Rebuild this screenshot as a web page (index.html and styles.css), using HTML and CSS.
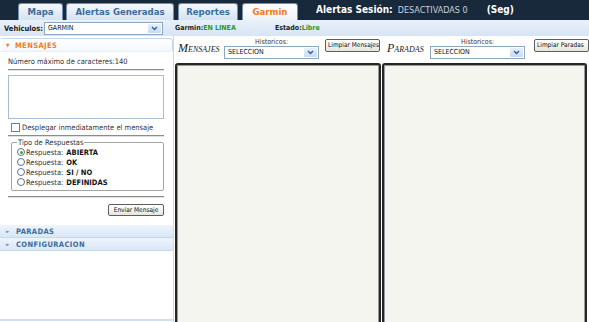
FILE: index.html
```html
<!DOCTYPE html>
<html lang="es">
<head>
<meta charset="UTF-8">
<title>Garmin</title>
<link rel="stylesheet" href="styles.css">
</head>
<body>
<div class="topbar">
    <ul class="tabs">
        <li class="tab t-mapa">Mapa</li>
        <li class="tab t-alertas">Alertas Generadas</li>
        <li class="tab t-reportes">Reportes</li>
        <li class="tab t-garmin active">Garmin</li>
    </ul>
    <div class="session"><b>Alertas Sesión:</b><span class="off">DESACTIVADAS 0</span><b class="seg">(Seg)</b></div>
</div>
<div class="subbar">
    <b class="lbl">Vehiculos:</b>
    <div class="select veh">GARMIN<span class="arrow"><svg width="7" height="5" viewBox="0 0 7 5"><path d="M1 1l2.5 2.5L6 1" fill="none" stroke="#2f5f9e" stroke-width="1.4"/></svg></span></div>
    <span class="status s-garmin"><b>Garmin:</b><b class="ok">EN LINEA</b></span>
    <span class="status"><b>Estado:</b><b class="ok">Libre</b></span>
</div>
<div class="main">
    <div class="sidebar">
        <div class="acc-head open"><span class="tri">&#9660;</span>MENSAJES</div>
        <div class="acc-body">
            <div class="maxchars">Número máximo de caracteres:140</div>
            <div class="rule"></div>
            <div class="msgbox"></div>
            <label class="check"><span class="box"></span>Desplegar inmediatamente el mensaje</label>
            <div class="rule"></div>
            <fieldset class="tipo">
                <legend>Tipo de Respuestas</legend>
                <div class="radio"><span class="dot on"></span>Respuesta: <b>ABIERTA</b></div>
                <div class="radio"><span class="dot"></span>Respuesta: <b>OK</b></div>
                <div class="radio"><span class="dot"></span>Respuesta: <b>SI / NO</b></div>
                <div class="radio"><span class="dot"></span>Respuesta: <b>DEFINIDAS</b></div>
            </fieldset>
            <div class="rule"></div>
            <div class="send-row"><span class="btn">Enviar Mensaje</span></div>
        </div>
        <div class="acc-head closed"><span class="tri">&#9658;</span>PARADAS</div>
        <div class="acc-head closed"><span class="tri">&#9658;</span>CONFIGURACION</div>
        <div class="side-fill"></div>
        <div class="side-foot"></div>
    </div>
    <div class="content">
        <div class="content-head">
            <div class="half h-left">
                <span class="title">Mensajes</span>
                <div class="hist">
                    <span class="hist-lbl">Historicos:</span>
                    <div class="select">SELECCION<span class="arrow"><svg width="7" height="5" viewBox="0 0 7 5"><path d="M1 1l2.5 2.5L6 1" fill="none" stroke="#2f5f9e" stroke-width="1.4"/></svg></span></div>
                </div>
                <span class="btn clear">Limpiar Mensajes</span>
            </div>
            <div class="half h-right">
                <span class="title">Paradas</span>
                <div class="hist">
                    <span class="hist-lbl">Historicos:</span>
                    <div class="select">SELECCION<span class="arrow"><svg width="7" height="5" viewBox="0 0 7 5"><path d="M1 1l2.5 2.5L6 1" fill="none" stroke="#2f5f9e" stroke-width="1.4"/></svg></span></div>
                </div>
                <span class="btn clear">Limpiar Paradas</span>
            </div>
        </div>
        <div class="panels">
            <div class="panel p-left"></div>
            <div class="panel p-right"></div>
        </div>
    </div>
</div>
</body>
</html>
```

FILE: styles.css
```css
body {
    margin: 0;
    padding: 0;
    width: 589px;
    height: 322px;
    overflow: hidden;
    font-family: "DejaVu Sans", Verdana, sans-serif;
    font-stretch: condensed;
    font-size: 8px;
    color: #222;
    background: #fff;
}
.topbar {
    height: 20px;
    background: #17293b;
    display: flex;
    align-items: flex-end;
}
.tabs {
    list-style: none;
    margin: 0 0 0 18px;
    padding: 0;
    display: flex;
    gap: 3px;
}
.tab {
    height: 16px;
    line-height: 16px;
    text-align: center;
    font-size: 9.5px;
    font-weight: bold;
    color: #3d6c9c;
    background: linear-gradient(#f4f8fc, #d5e3f2);
    border: 1px solid #6f8fae;
    border-bottom: none;
    border-radius: 3px 3px 0 0;
}
.t-mapa { width: 43px; }
.t-alertas { width: 106px; }
.t-reportes { width: 58px; margin-left: 1px; }
.t-garmin { width: 54px; margin-left: 1px; }
.tab.active {
    color: #ef7b1e;
    background: linear-gradient(#ffffff, #eef4fa);
}
.session {
    color: #fff;
    font-size: 10px;
    margin-left: 18px;
    height: 19px;
    line-height: 19px;
    align-self: flex-start;
}
.session .off {
    font-size: 9px;
    color: #c9d2dc;
    margin-left: 5px;
}
.session .seg {
    margin-left: 19px;
}
.subbar {
    height: 16px;
    background: linear-gradient(#e9f1fa, #d6e4f4);
    display: flex;
    align-items: center;
    padding-left: 4px;
}
.subbar .lbl {
    color: #222;
    font-size: 7.5px;
    margin-right: 1px;
}
.select {
    position: relative;
    height: 11px;
    line-height: 11px;
    border: 1px solid #8ea6c0;
    background: #fff;
    padding-left: 3px;
    font-size: 7px;
    color: #111;
}
.select .arrow {
    position: absolute;
    right: 1px;
    top: 1px;
    width: 13px;
    height: 9px;
    background: linear-gradient(#e8f0fa, #c8daef);
    border-radius: 1px;
    display: flex;
    align-items: center;
    justify-content: center;
}
.veh {
    width: 114px;
}
.status {
    font-size: 7px;
    color: #222;
}
.s-garmin {
    margin-left: 12px;
    width: 100px;
}
.ok {
    color: #1f9a1f;
}
.main {
    display: flex;
    height: 286px;
}
.sidebar {
    width: 175px;
    border-right: 1px solid #c9dbee;
    display: flex;
    flex-direction: column;
}
.acc-head {
    flex-shrink: 0;
    height: 12px;
    line-height: 12px;
    font-weight: bold;
    font-size: 7.5px;
    letter-spacing: 0.4px;
}
.acc-head.open {
    margin: 2px 0 0 2px;
    color: #ef7f22;
    border: 1px solid #c3d6eb;
    border-bottom: none;
    border-left: none;
    border-radius: 0 4px 0 0;
    background: linear-gradient(#ffffff, #f3f7fc);
}
.acc-head.open .tri {
    padding-left: 4px;
    width: 9px;
}
.acc-head.closed {
    color: #3b6b9c;
    background: linear-gradient(#eef4fb, #d9e7f6);
    border-bottom: 1px solid #c6d8ec;
}
.tri {
    display: inline-block;
    width: 10px;
    padding-left: 6px;
    font-size: 5px;
    vertical-align: 1px;
}
.acc-head.closed .tri {
    color: #6f95bc;
}
.acc-body {
    flex-shrink: 0;
    padding: 0 9px 0 8px;
    border-top: 1px solid #e6eef7;
    font-size: 7.5px;
}
.maxchars {
    margin-top: 3px;
    height: 14px;
    line-height: 14px;
    color: #333;
}
.rule {
    height: 0;
    border-top: 1px solid #8c8c8c;
    border-bottom: 1px solid #e0e0e0;
}
.msgbox {
    margin-top: 4px;
    height: 42px;
    border: 1px solid #a9bcd0;
    background: #fff;
}
.check {
    display: flex;
    align-items: center;
    height: 12px;
    margin: 2px 0 2px 3px;
    color: #333;
}
.check .box {
    width: 7px;
    height: 7px;
    border: 1px solid #6d7f92;
    background: #fff;
    margin-right: 2px;
}
.tipo {
    margin: 1px 0 5px 3px;
    padding: 0 0 3px 5px;
    border: 1px solid #a5a5a5;
    border-radius: 2px;
}
.tipo legend {
    padding: 0 1px;
    color: #333;
    font-size: 7.5px;
    line-height: 9px;
}
.radio {
    display: flex;
    align-items: center;
    height: 10px;
    color: #333;
    font-size: 7.5px;
}
.radio b {
    margin-left: 3px;
    color: #111;
}
.dot {
    box-sizing: border-box;
    width: 8px;
    height: 8px;
    border: 1px solid #5c7391;
    border-radius: 50%;
    background: #fff;
    margin-right: 1px;
    position: relative;
}
.dot.on::after {
    content: "";
    position: absolute;
    left: 1.5px;
    top: 1.5px;
    width: 3px;
    height: 3px;
    border-radius: 50%;
    background: #2fb52f;
}
.send-row {
    display: flex;
    justify-content: flex-end;
    margin-top: 6px;
    height: 21px;
}
.btn {
    display: inline-block;
    box-sizing: border-box;
    height: 12px;
    line-height: 10px;
    padding: 0 3px;
    font-size: 6.5px;
    color: #111;
    border: 1px solid #5d5d5d;
    border-radius: 2px;
    background: linear-gradient(#ffffff, #e6e6dd);
    white-space: nowrap;
}
.send-row .btn {
    width: 56px;
    text-align: center;
}
.side-fill {
    flex: 1;
}
.side-foot {
    flex-shrink: 0;
    height: 2px;
    background: #cfe0f1;
    margin-bottom: 1px;
}
.content {
    flex: 1;
    display: flex;
    flex-direction: column;
}
.content-head {
    flex-shrink: 0;
    height: 27px;
    display: flex;
}
.half {
    display: flex;
    align-items: flex-start;
}
.h-left {
    width: 206px;
    padding-left: 4px;
}
.h-right {
    flex: 1;
    padding-left: 3px;
}
.title {
    font-family: "Liberation Serif", "Times New Roman", serif;
    font-style: italic;
    font-variant: small-caps;
    font-size: 12px;
    color: #1c1c1c;
    margin-top: 5px;
    width: 46px;
}
.h-right .title {
    width: 43px;
}
.hist {
    display: flex;
    flex-direction: column;
    align-items: center;
    margin-top: 2px;
}
.hist-lbl {
    font-size: 7px;
    color: #333;
    height: 8px;
    line-height: 8px;
}
.hist .select {
    width: 90px;
}
.btn.clear {
    margin-top: 3px;
    height: 13px;
    line-height: 11px;
    padding: 0 2px;
}
.h-left .btn.clear {
    margin-left: 6px;
    width: 55px;
}
.h-right .btn.clear {
    margin-left: 9px;
    width: 55px;
}
.panels {
    flex: 1;
    display: flex;
    gap: 1px;
    padding-left: 1px;
}
.panel {
    box-sizing: border-box;
    height: 270px;
    background: #f5f5f0;
    border: 2px solid #262626;
    border-bottom: none;
    border-radius: 3px 3px 0 0;
    box-shadow: inset 1px 1px 0 #9a9a9a, inset -1px 0 0 #9a9a9a;
}
.p-left {
    width: 206px;
}
.p-right {
    width: 205px;
}
```
